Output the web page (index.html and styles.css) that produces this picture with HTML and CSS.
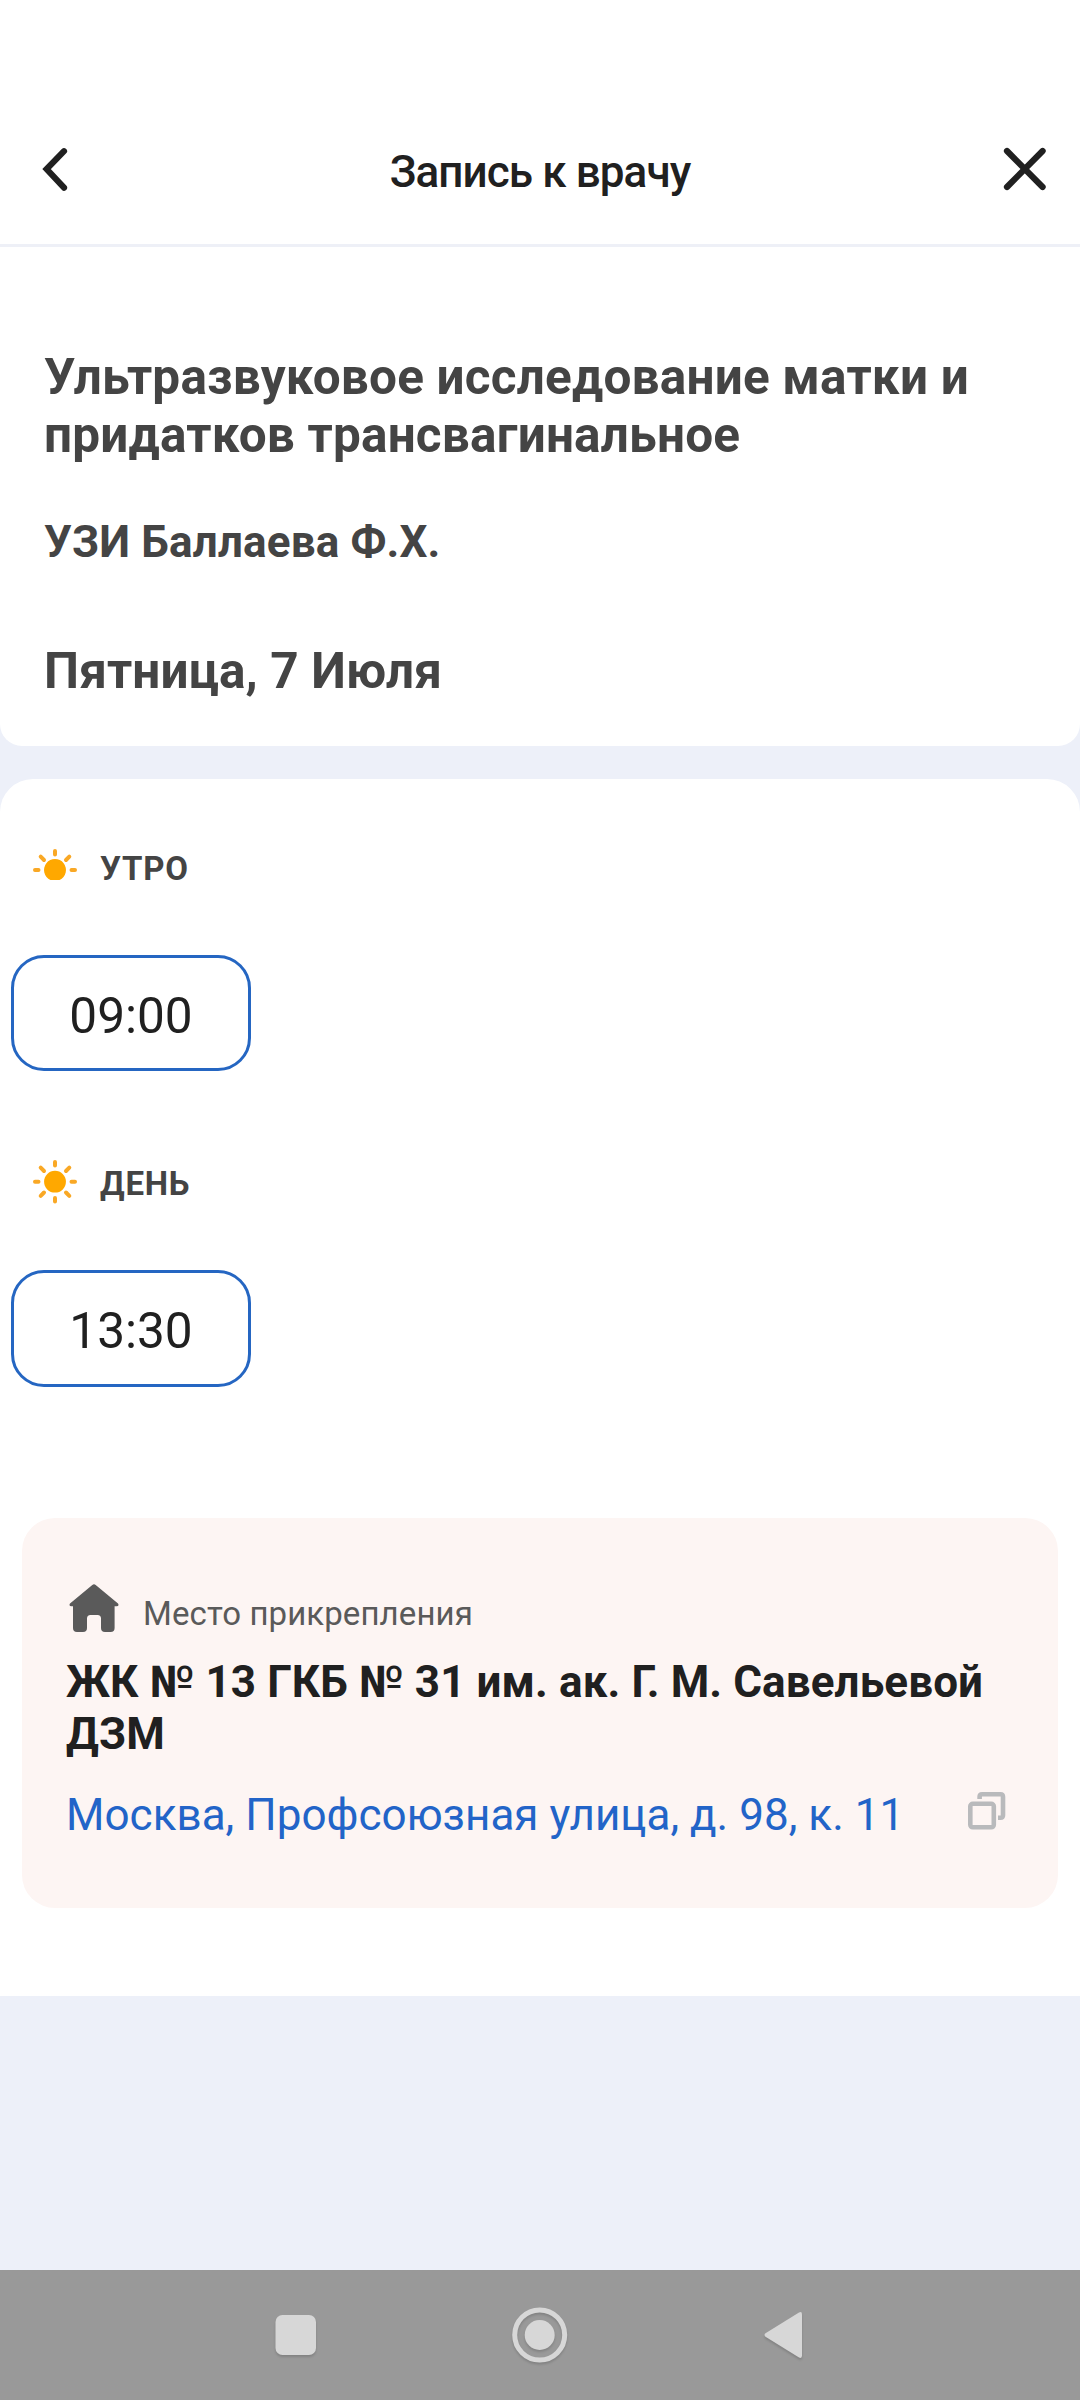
FILE: index.html
```html
<!DOCTYPE html>
<html lang="ru">
<head>
<meta charset="utf-8">
<title>Запись к врачу</title>
<link rel="stylesheet" href="styles.css">
</head>
<body>
<header class="header">
  <svg class="header-icon" width="48" height="48" viewBox="0 0 48 48"><path d="M32 7.200 14.600 25 32 43.700"/></svg>
  <h1 class="header-title">Запись к врачу</h1>
  <svg class="header-icon" width="48" height="48" viewBox="0 0 48 48"><path d="M7 7 42.600 43M42.600 7 7 43"/></svg>
</header>
<section class="summary">
  <h2 class="service">Ультразвуковое исследование матки и придатков трансвагинальное</h2>
  <p class="doctor">УЗИ Баллаева Ф.Х.</p>
  <p class="date">Пятница, 7 Июля</p>
</section>
<main class="slots">
  <div class="period">
    <svg class="sun" width="44" height="44" viewBox="0 0 44 44"><path class="disc" d="M17.400 32a11 11 0 1 1 9.200 0z"/><path d="M22 3v3.500M2 22h3.500M38.500 22H42M7.700 8.700l3.300 3.300M36.300 8.700 33 12"/></svg>
    <span class="period-name">УТРО</span>
  </div>
  <button class="time">09:00</button>
  <div class="period period-day">
    <svg class="sun" width="44" height="44" viewBox="0 0 44 44"><circle class="disc" cx="22" cy="21.700" r="10.900"/><path d="M22 2v3.500M22 38v3.500M2 21.700h3.500M38.500 21.700H42M7.700 7.700l3.300 3.300M36.300 7.700 33 11M7.700 35.800 11 32.500M36.300 35.800 33 32.500"/></svg>
    <span class="period-name">ДЕНЬ</span>
  </div>
  <button class="time time-day">13:30</button>
  <section class="place">
    <div class="place-label">
      <svg width="50" height="48" viewBox="0 0 50 48"><path d="M23.300.900Q25 -.500 26.700.900L49 19.500Q50.500 22.200 47.500 22.300H45.600V44Q45.600 48 41.600 48H36Q32 48 32 44V34.500Q32 31 28.500 31H21.500Q18 31 18 34.500V44Q18 48 14 48H8Q4 48 4 44V22.300H2.500Q-.500 22.200 1 19.500Z"/></svg>
      <span class="place-caption">Место прикрепления</span>
    </div>
    <h3 class="place-name">ЖК № 13 ГКБ № 31 им. ак. Г. М. Савельевой ДЗМ</h3>
    <div class="address">
      <a class="address-text">Москва, Профсоюзная улица, д. 98, к. 11</a>
      <svg class="copy" width="38" height="38" viewBox="0 0 38 38"><rect x="2.300" y="11.800" width="23.500" height="23.500" rx="2.500"/><path d="M11.600 7V4.800Q11.600 2.300 14.100 2.300H32.500Q35 2.300 35 4.800V23.200Q35 25.700 32.500 25.700H30"/></svg>
    </div>
  </section>
</main>
<nav class="navbar">
  <svg width="1080" height="130" viewBox="0 0 1080 130"><rect x="275.500" y="45" width="40.500" height="40" rx="7"/><circle cx="539.700" cy="65" r="15"/><circle class="ring" cx="539.700" cy="65" r="25"/><path d="M765.500 63.300 799 42.500Q802 41 802 44.500V85.500Q802 89 799 87.500L765.500 66.700Q763.500 65 765.500 63.300Z"/></svg>
</nav>
</body>
</html>
```
FILE: styles.css
```css
* { box-sizing: border-box; }
body { margin: 0; min-height: 2400px; display: flex; flex-direction: column; background: #edf0f9; font-family: Roboto, "Noto Sans", sans-serif; color: #202020; }
h1, h2, h3, p { margin: 0; }
svg { display: block; flex: none; }

.header { height: 247px; padding: 92px 32px 0; display: flex; align-items: center; justify-content: space-between; background: #fff; border-bottom: 3px solid #eef0f7; }
.header-icon { fill: none; stroke: #202020; stroke-width: 6.200; stroke-linecap: round; }
.header-title { padding-top: 8px; font-size: 44px; line-height: 52px; font-weight: 500; letter-spacing: -.9px; }

.summary { height: 499px; padding: 100.500px 44px 0; background: #fff; border-radius: 0 0 22px 22px; color: #444; font-weight: 700; }
.service { font-size: 49.500px; line-height: 58.500px; letter-spacing: .2px; }
.doctor { margin-top: 51.500px; font-size: 44px; line-height: 52px; letter-spacing: .16px; }
.date { margin-top: 74px; font-size: 49.500px; line-height: 58px; letter-spacing: .14px; }

.slots { height: 1217px; margin-top: 33px; padding: 69px 22px 0; background: #fff; border-radius: 33px 33px 0 0; }
.period { height: 44px; padding-left: 11px; display: flex; gap: 23px; }
.period-name { padding-top: 1px; font-size: 33px; line-height: 40px; font-weight: 700; color: #444; letter-spacing: .8px; }
.period-day { margin-top: 89px; }
.period-day .period-name { padding-top: 4px; }
.sun { fill: none; stroke: #f9a825; stroke-width: 4; stroke-linecap: round; }
.disc { fill: #ffa800; stroke: none; }
.time { display: flex; align-items: center; justify-content: center; width: 240px; height: 116px; margin: 63px 0 0 -11px; padding: 5px 0 0; border: 3px solid #2566c2; border-radius: 33px; background: #fff; font: 400 49.500px/58px Roboto, "Noto Sans", sans-serif; color: #202020; }
.time-day { height: 117px; margin-top: 66px; }

.place { height: 390px; margin-top: 131px; padding: 66px 44px 0; border-radius: 33px; background: #fdf5f3; }
.place-label { height: 48px; margin-left: 2.500px; display: flex; align-items: flex-end; gap: 24.500px; font-size: 33px; line-height: 38px; color: #5a5a5a; }
.place-label svg { fill: #5a5a5a; }
.place-caption { margin-bottom: -1px; letter-spacing: .1px; }
.place-name { margin-top: 25px; font-size: 44px; line-height: 51.600px; font-weight: 700; letter-spacing: .11px; }
.address { margin-top: 28.500px; display: flex; justify-content: space-between; padding-right: 8px; }
.address-text { font-size: 44px; line-height: 52px; color: #2264c8; letter-spacing: .03px; }
.copy { margin-top: 3px; fill: none; stroke: #b9babc; stroke-width: 4.600; }

.navbar { height: 130px; margin-top: auto; background: #999; }
.navbar svg { fill: #d7d7d7; filter: drop-shadow(0 2px 1px rgba(0, 0, 0, .15)); }
.ring { fill: none; stroke: #d7d7d7; stroke-width: 5; }
```
